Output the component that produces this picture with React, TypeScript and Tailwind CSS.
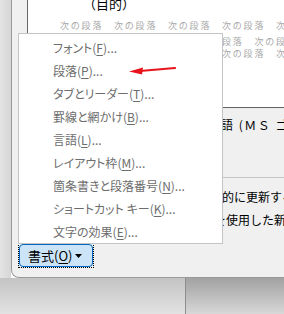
import React from "react";

const items: { label: string; key: string }[] = [
  { label: "フォント", key: "F" },
  { label: "段落", key: "P" },
  { label: "タブとリーダー", key: "T" },
  { label: "罫線と網かけ", key: "B" },
  { label: "言語", key: "L" },
  { label: "レイアウト枠", key: "M" },
  { label: "箇条書きと段落番号", key: "N" },
  { label: "ショートカット キー", key: "K" },
  { label: "文字の効果", key: "E" },
];

const jp = "font-['Noto_Sans_CJK_JP','Noto_Sans',sans-serif]";

const App = () => {
  return (
    <div className={`relative w-[284px] h-[314px] overflow-hidden flex flex-col ${jp}`}>
      {/* window area */}
      <div className="flex h-[278px] shrink-0">
        <div className="w-[11px] shrink-0 bg-[linear-gradient(to_right,#e4e4e4,#d6d6d6)]" />
        <div className="flex-1 min-w-0 overflow-hidden flex flex-col bg-[#f0f0f0] border-l border-b border-[#9a9a9a] rounded-bl-[8px]">
          {/* preview box */}
          <div className="ml-[15px] h-[108px] shrink-0 bg-white border-l border-b border-[#666666] flex flex-col overflow-hidden">
            <div className="-mt-[4px] h-[16px] leading-[16px] pl-[55px] text-[13px] text-black whitespace-nowrap">
              （目的）
            </div>
            <div className="mt-[8px] h-[12px] leading-[12px] pl-[32px] text-[9px] tracking-[1.8px] text-[#a8a8a8] whitespace-nowrap">
              次の段落　次の段落　次の段落　次の段落　次の段落
            </div>
            <div className="mt-[4px] h-[12px] leading-[12px] pl-[32px] text-[9px] tracking-[1.8px] text-[#a8a8a8] whitespace-nowrap">
              段落　次の段落　次の段落　次の段落　次の段落
            </div>
            <div className="h-[12px] leading-[12px] pl-[32px] text-[9px] tracking-[1.8px] text-[#a8a8a8] whitespace-nowrap">
              次の段落　次の段落　次の段落　次の段落　次
            </div>
          </div>
          <div className="ml-[15px] h-px shrink-0 bg-[#e8e8e8]" />

          <div className="h-[31px] shrink-0 flex items-center pl-[209px] text-[12px] tracking-[1.5px] text-black whitespace-nowrap">
            語 (ＭＳ ゴシック)
          </div>
          <div className="h-[37px] shrink-0" />
          <div className="ml-[15px] h-px shrink-0 bg-[#c4c4c4]" />

          <div className="mt-[7px] h-[23px] shrink-0 flex items-center pl-[210px] text-[12px] text-black whitespace-nowrap">
            的に更新する
          </div>
          <div className="h-[23px] shrink-0 flex items-center pl-[202px] text-[12px] text-black whitespace-nowrap">
            を使用した新規
          </div>

          {/* format button */}
          <div className="mt-[12px] ml-[6px] w-[76px] h-[25px] shrink-0 border border-dotted border-black">
            <div className="h-full rounded-[4px] border border-[#0067c0] bg-[#cce4f7] flex items-center pl-[8px] gap-[3px] text-[13px] text-black">
              <span>
                書式(<span className="underline underline-offset-2">O</span>)
              </span>
              <svg width="7" height="4" viewBox="0 0 7 4" className="mt-[1px]">
                <polygon points="0,0 7,0 3.5,4" fill="#000" />
              </svg>
            </div>
          </div>
        </div>
      </div>

      {/* background below window */}
      <div className="flex-1 flex">
        <div className="w-[186px] shrink-0 border-r border-[#8e8e8e] bg-[linear-gradient(to_bottom,#c4c4c4,#e2e2e2)]" />
        <div className="flex-1 bg-[linear-gradient(to_bottom,#a2a2a2,#d8d8d8)]" />
      </div>

      {/* context menu */}
      <div className="absolute left-[18px] top-[33px] w-[205px] h-[211px] bg-white border border-[#c4c4c4] pt-[2px]">
        {items.map((it) => (
          <div
            key={it.key}
            className="h-[23px] flex items-center pl-[34px] text-[12px] text-[#6d6d6d] whitespace-nowrap [font-feature-settings:'palt']"
          >
            {it.label}(<span className="underline underline-offset-2">{it.key}</span>)...
          </div>
        ))}
      </div>

      {/* red annotation arrow */}
      <svg className="absolute left-[128px] top-[62px]" width="50" height="16" viewBox="0 0 50 16">
        <line x1="12" y1="9" x2="47" y2="6" stroke="#e8141c" strokeWidth="2.2" strokeLinecap="round" />
        <polygon points="1,9.6 15,5.6 14,12.6" fill="#e8141c" />
      </svg>
    </div>
  );
};

export default App;
